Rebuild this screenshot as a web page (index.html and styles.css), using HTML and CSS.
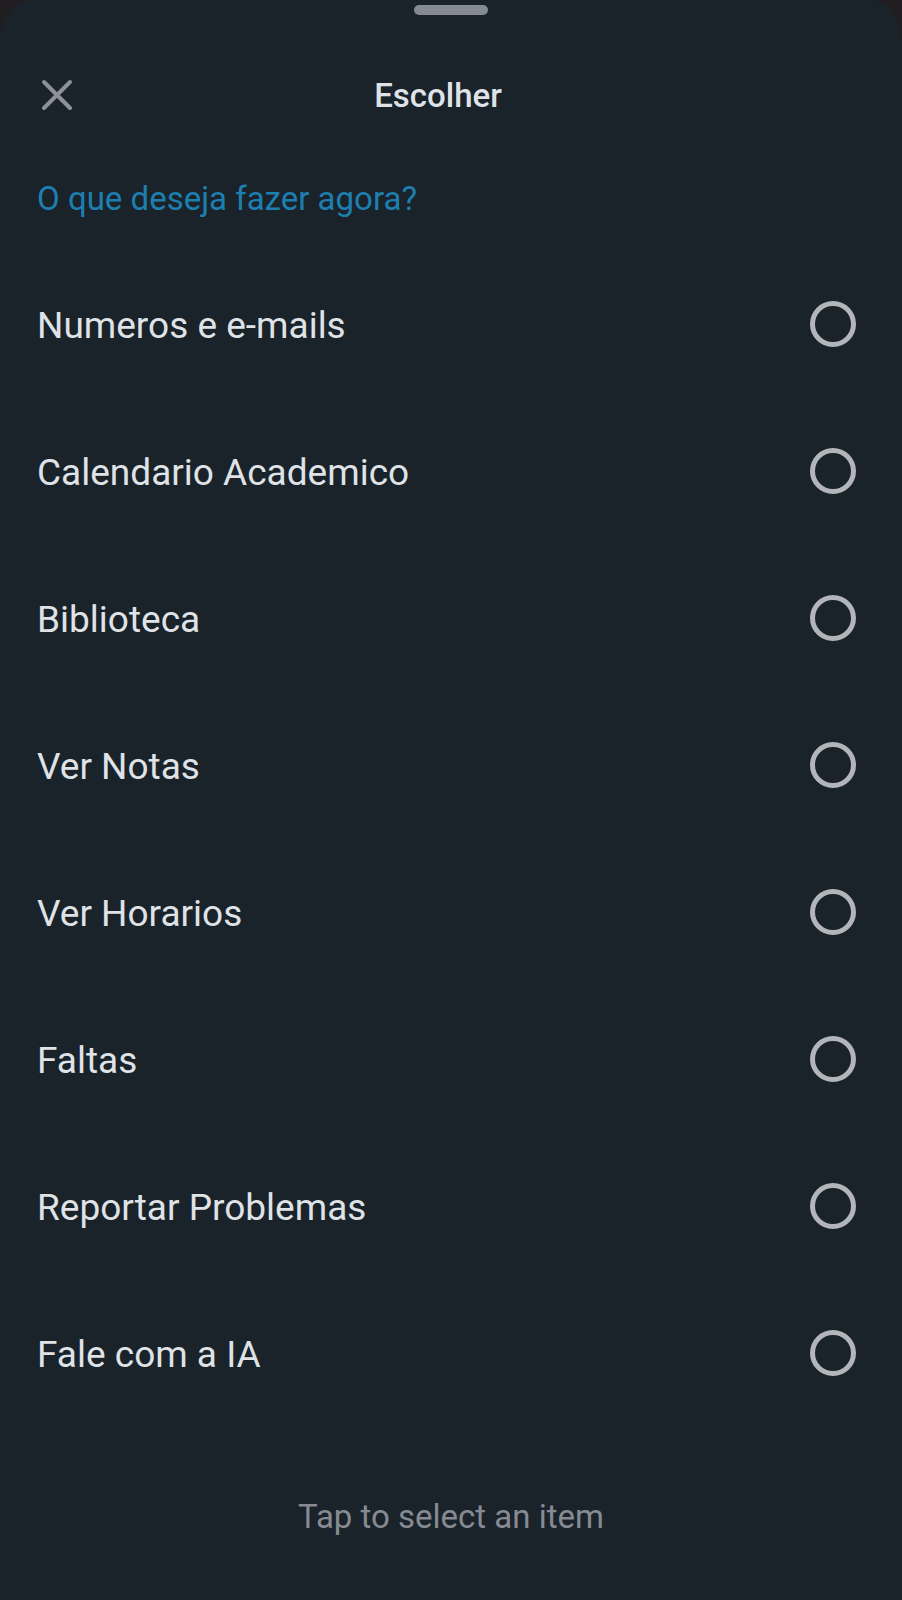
FILE: index.html
```html
<!DOCTYPE html>
<html lang="pt-BR">
<head>
<meta charset="utf-8">
<meta name="viewport" content="width=device-width, initial-scale=1">
<title>Escolher</title>
<link rel="stylesheet" href="styles.css">
</head>
<body>
<main class="sheet">
  <div class="handle"></div>
  <header class="header">
    <button class="close" type="button" aria-label="Fechar">
      <svg class="close-icon" viewBox="0 0 32 32" aria-hidden="true"><path d="M3 3 29 29M29 3 3 29"/></svg>
    </button>
    <h1 class="title">Escolher</h1>
  </header>
  <form class="form">
    <h2 class="question" id="question">O que deseja fazer agora?</h2>
    <div class="options" role="radiogroup" aria-labelledby="question">
      <label class="option"><span class="option-text">Numeros e e-mails</span><input class="radio" type="radio" name="item"></label>
      <label class="option"><span class="option-text">Calendario Academico</span><input class="radio" type="radio" name="item"></label>
      <label class="option"><span class="option-text">Biblioteca</span><input class="radio" type="radio" name="item"></label>
      <label class="option"><span class="option-text">Ver Notas</span><input class="radio" type="radio" name="item"></label>
      <label class="option"><span class="option-text">Ver Horarios</span><input class="radio" type="radio" name="item"></label>
      <label class="option"><span class="option-text">Faltas</span><input class="radio" type="radio" name="item"></label>
      <label class="option"><span class="option-text">Reportar Problemas</span><input class="radio" type="radio" name="item"></label>
      <label class="option"><span class="option-text">Fale com a IA</span><input class="radio" type="radio" name="item"></label>
    </div>
  </form>
  <p class="hint">Tap to select an item</p>
</main>
</body>
</html>
```
FILE: styles.css
```css
* { box-sizing: border-box; }
body {
  margin: 0;
  background: #211e22;
  font-family: Roboto, "Liberation Sans", sans-serif;
  color: #dfe2e6;
}
.sheet {
  display: flex;
  flex-direction: column;
  min-height: 100vh;
  padding: 5px 37px 0;
  border-radius: 32px 32px 0 0 / 44px 44px 0 0;
  background: #1a222a;
}
.handle {
  align-self: center;
  width: 74px;
  height: 10px;
  border-radius: 5px;
  background: #868b93;
}
.header {
  display: grid;
  grid-template-columns: 40px 1fr 66px;
  align-items: center;
  height: 120px;
  margin-top: 20px;
}
.close {
  display: grid;
  place-items: center;
  width: 40px;
  height: 40px;
  padding: 0;
  border: 0;
  background: none;
}
.close-icon {
  width: 32px;
  height: 32px;
  fill: none;
  stroke: #8d9299;
  stroke-width: 4;
  stroke-linecap: round;
}
.title {
  margin: 0;
  padding-top: 2px;
  font-size: 33px;
  font-weight: 500;
  line-height: 40px;
  text-align: center;
}
.question {
  margin: 24px 0 0;
  font-size: 33px;
  font-weight: 400;
  line-height: 40px;
  color: #1d7fb0;
}
.options { margin-top: 31px; }
.option {
  display: flex;
  align-items: center;
  justify-content: space-between;
  height: 147px;
  padding-right: 9px;
  font-size: 37px;
  line-height: 44px;
}
.option-text { padding-top: 4px; }
.radio {
  appearance: none;
  width: 46px;
  height: 46px;
  margin: 0;
  border: 5px solid #b2b5b9;
  border-radius: 50%;
}
.radio:checked { box-shadow: inset 0 0 0 8px #1a222a; background: #1d7fb0; }
.hint {
  margin: 71px 0 0;
  font-size: 33px;
  line-height: 40px;
  text-align: center;
  color: #868b93;
}
```
